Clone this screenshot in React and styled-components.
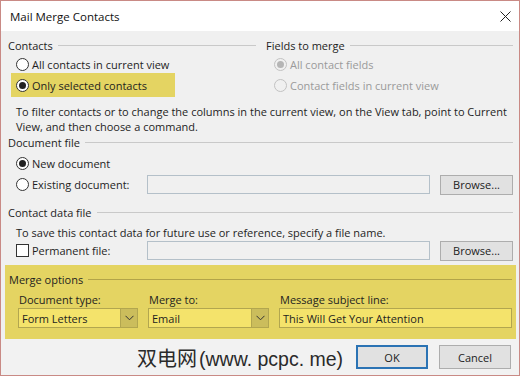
import React from 'react'
import styled, { createGlobalStyle } from 'styled-components'

const Global = createGlobalStyle`
  html, body { margin: 0; padding: 0; background: #ffffff; overflow: hidden; }
  body { font-family: "Open Sans", "Noto Sans", sans-serif; font-size: 11px; color: #1e1e1e; }
  * { box-sizing: border-box; }
`

const Window = styled.div`
  width: 520px;
  height: 376px;
  border: 1px solid #c98a85;
  background: #f0f0f0;
  display: flex;
  flex-direction: column;
  overflow: hidden;
`

const TitleBar = styled.div`
  flex: none;
  height: 30px;
  background: #ffffff;
  display: flex;
  align-items: center;
  justify-content: space-between;
  padding: 0 8px 0 9px;
  font-size: 11.5px;
  color: #111;
`

const Body = styled.div`
  flex: none;
  padding: 6px 6px 0 7px;
  display: flex;
  flex-direction: column;
`

const GroupHead = styled.div`
  height: 16px;
  display: flex;
  align-items: center;
  gap: 5px;
  &::after {
    content: '';
    flex: 1;
    height: 1px;
    background: ${p => (p.$olive ? '#b3a448' : '#c9c9c9')};
  }
`

const Columns = styled.div`
  display: grid;
  grid-template-columns: 248px 1fr;
  gap: 10px;
`

const Col = styled.div`
  display: flex;
  flex-direction: column;
`

const OptionRow = styled.label`
  height: ${p => p.$h || 20}px;
  display: flex;
  align-items: center;
  gap: 3px;
  white-space: nowrap;
  padding-left: ${p => p.$pad ?? 8}px;
  color: ${p => (p.$disabled ? '#9a9a9a' : 'inherit')};
`

const Highlight = styled.div`
  margin-left: 3px;
  width: 164px;
  height: 24px;
  background: #e4d462;
  display: flex;
  align-items: center;
`

const Radio = styled.span`
  width: 13px;
  height: 13px;
  border-radius: 50%;
  border: 1px solid ${p => (p.$disabled ? '#c2c2c2' : '#333')};
  background: ${p => (p.$disabled ? '#f0f0f0' : '#fff')};
  display: inline-flex;
  align-items: center;
  justify-content: center;
  flex: none;
  &::after {
    content: '';
    width: 7px;
    height: 7px;
    border-radius: 50%;
    background: ${p => (p.$disabled ? '#b5b5b5' : '#222')};
    display: ${p => (p.$checked ? 'block' : 'none')};
  }
`

const Check = styled.span`
  width: 13px;
  height: 13px;
  border: 1px solid #333;
  background: #fff;
  flex: none;
`

const Para = styled.p`
  margin: ${p => p.$mt ?? 8}px 0 0 8px;
  line-height: 15px;
  white-space: nowrap;
`

const Section = styled.div`
  margin-top: ${p => p.$mt || 0}px;
  display: flex;
  flex-direction: column;
`

const FileRow = styled.div`
  height: 21px;
  margin-top: ${p => p.$mt || 0}px;
  display: grid;
  grid-template-columns: 129px 1fr 73px;
  column-gap: 10px;
  align-items: center;
`

const Field = styled.div`
  height: 19px;
  border: 1px solid #b4c0c9;
  background: #f0f0f0;
`

const Button = styled.button`
  height: ${p => p.$h || 20}px;
  width: ${p => p.$w || 73}px;
  font: inherit;
  color: #222;
  background: #e1e1e1;
  border: ${p => (p.$primary ? '2px solid #2b73b4' : '1px solid #adadad')};
  padding: 0;
  display: flex;
  align-items: center;
  justify-content: center;
`

const MergeBox = styled.div`
  margin: 4px -3px 0 -3px;
  background: #e4d462;
  padding: 6px 4px 11px 4px;
  display: flex;
  flex-direction: column;
`

const MergeGrid = styled.div`
  margin-top: 4px;
  padding-left: 9px;
  display: grid;
  grid-template-columns: 120px 121px 1fr;
  column-gap: 10px;
  row-gap: 1px;
`

const SmallLabel = styled.div`
  height: 16px;
  display: flex;
  align-items: center;
  padding-left: 1px;
`

const Combo = styled.div`
  height: 20px;
  border: 1px solid #b2a64f;
  background: #f4e36b;
  display: flex;
  align-items: stretch;
  padding-left: 3px;
`

const ComboText = styled.span`
  flex: 1;
  display: flex;
  align-items: center;
`

const Arrow = styled.span`
  width: 17px;
  background: #cbbd5c;
  border-left: 1px solid #b2a64f;
  display: flex;
  align-items: center;
  justify-content: center;
`

const Footer = styled.div`
  flex: 1;
  display: flex;
  align-items: center;
  padding: 0 6px 0 136px;
  gap: 11px;
  background: #f2f2f2;
`

const Watermark = styled.div`
  font-family: "Noto Sans CJK SC", "DejaVu Sans", sans-serif;
  font-size: 20px;
  color: #2a2a2a;
  width: 208px;
  white-space: nowrap;
  display: flex;
  align-items: baseline;
`

const Latin = styled.span`
  font-family: "Liberation Sans", Arial, sans-serif;
  font-size: 19.5px;
  margin-left: 2px;
`

const Chevron = () => (
  <svg width="9" height="6" viewBox="0 0 9 6">
    <path d="M0.5 0.8 L4.5 4.8 L8.5 0.8" fill="none" stroke="#333" strokeWidth="1" />
  </svg>
)

export default function App() {
  return (
    <>
      <Global />
      <Window>
        <TitleBar>
          <span>Mail Merge Contacts</span>
          <svg width="11" height="11" viewBox="0 0 11 11">
            <path d="M0.5 0.5 L10.5 10.5 M10.5 0.5 L0.5 10.5" stroke="#222" strokeWidth="1" />
          </svg>
        </TitleBar>
        <Body>
          <Columns>
            <Col>
              <GroupHead>Contacts</GroupHead>
              <OptionRow $h={18} style={{ marginTop: 2 }}>
                <Radio />All contacts in current view
              </OptionRow>
              <Highlight>
                <OptionRow $pad={5}>
                  <Radio $checked />Only selected contacts
                </OptionRow>
              </Highlight>
            </Col>
            <Col>
              <GroupHead>Fields to merge</GroupHead>
              <OptionRow $h={18} $disabled style={{ marginTop: 2 }}>
                <Radio $disabled $checked />All contact fields
              </OptionRow>
              <OptionRow $h={24} $disabled>
                <Radio $disabled />Contact fields in current view
              </OptionRow>
            </Col>
          </Columns>
          <Para $mt={7}>
            To filter contacts or to change the columns in the current view, on the View tab, point to Current
            <br />
            View, and then choose a command.
          </Para>

          <Section>
            <GroupHead>Document file</GroupHead>
            <OptionRow $h={21} style={{ marginTop: 3 }}>
              <Radio $checked />New document
            </OptionRow>
            <FileRow>
              <OptionRow>
                <Radio />Existing document:
              </OptionRow>
              <Field />
              <Button>Browse...</Button>
            </FileRow>
          </Section>

          <Section $mt={9}>
            <GroupHead>Contact data file</GroupHead>
            <Para $mt={5}>To save this contact data for future use or reference, specify a file name.</Para>
            <FileRow>
              <OptionRow>
                <Check />Permanent file:
              </OptionRow>
              <Field />
              <Button>Browse...</Button>
            </FileRow>
          </Section>

          <MergeBox>
            <GroupHead $olive>Merge options</GroupHead>
            <MergeGrid>
              <SmallLabel>Document type:</SmallLabel>
              <SmallLabel>Merge to:</SmallLabel>
              <SmallLabel>Message subject line:</SmallLabel>
              <Combo>
                <ComboText>Form Letters</ComboText>
                <Arrow><Chevron /></Arrow>
              </Combo>
              <Combo>
                <ComboText>Email</ComboText>
                <Arrow><Chevron /></Arrow>
              </Combo>
              <Combo>
                <ComboText>This Will Get Your Attention</ComboText>
              </Combo>
            </MergeGrid>
          </MergeBox>
        </Body>
        <Footer>
          <Watermark>双电网<Latin>(www. pcpc. me)</Latin></Watermark>
          <Button $primary $h={24} $w={72}>OK</Button>
          <Button $h={24} $w={72}>Cancel</Button>
        </Footer>
      </Window>
    </>
  )
}
